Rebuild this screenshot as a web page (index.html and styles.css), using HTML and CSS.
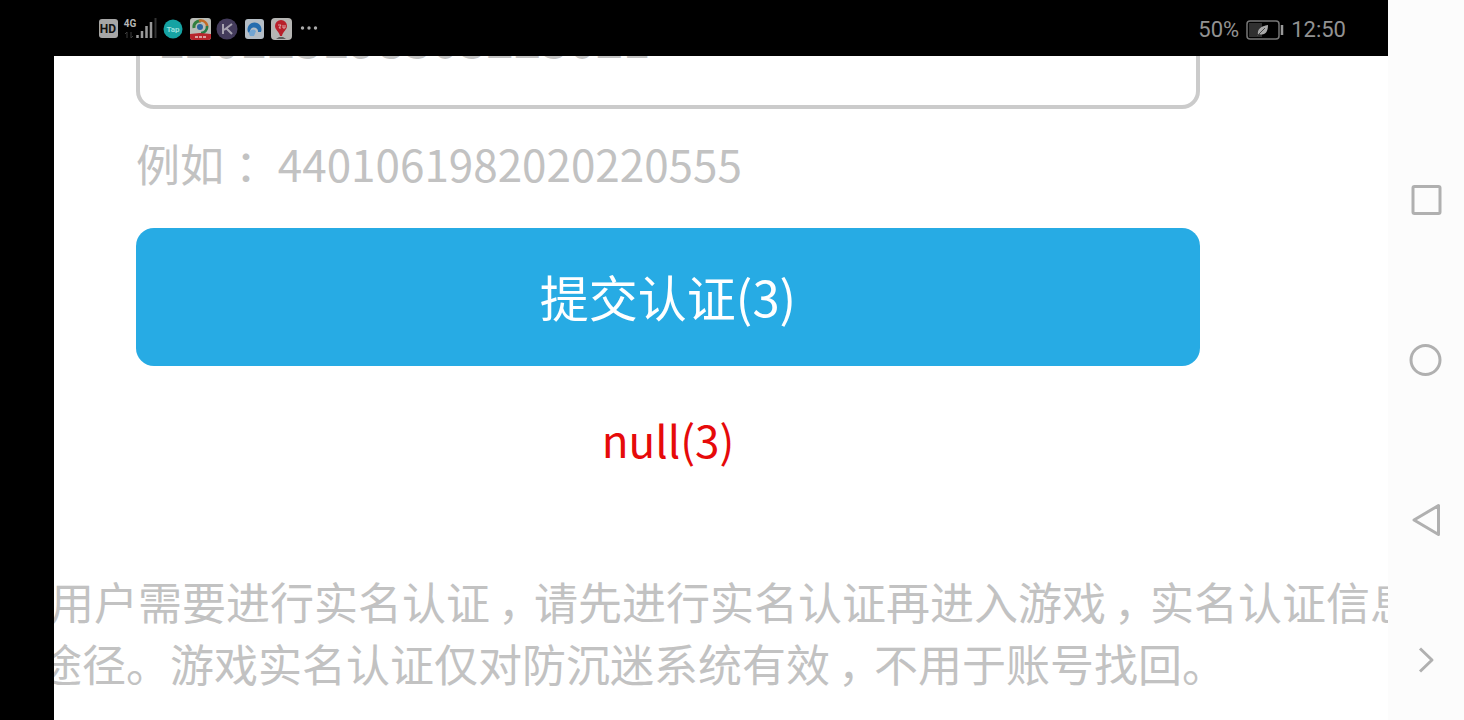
FILE: index.html
```html
<!DOCTYPE html>
<html lang="zh-CN">
<head>
    <meta charset="UTF-8">
    <meta name="viewport" content="width=device-width, initial-scale=1.0">
    <title>实名认证</title>
    <link rel="stylesheet" href="styles.css">
</head>
<body>
    <div class="screen">
        <header class="status-bar">
            <div class="status-icons">
                <svg width="232" height="44" viewBox="0 0 232 44">
                    <!-- HD -->
                    <rect x="9" y="11" width="19" height="19" rx="3" fill="#a6a6a6"/>
                    <text class="icon-hd" x="18" y="25" fill="#111">HD</text>
                    <!-- sinal 4G -->
                    <text class="icon-4g" x="40" y="19" fill="#b5b5b5">4G</text>
                    <path d="M37 24v6M35 26l2-2M41 24v6l2-2" fill="none" stroke="#3c3c3c" stroke-width="1"/>
                    <path d="M47.500 27v3M52 23v7M56.500 18v12M61 14v16" stroke="#9a9a9a" stroke-width="2.500"/>
                    <path d="M65.500 10v20" stroke="#333" stroke-width="2"/>
                    <!-- apps -->
                    <circle cx="83" cy="21" r="9.500" fill="#16a3a3"/>
                    <text class="icon-tap" x="83" y="24" fill="#9be0de">Tap</text>
                    <rect x="100" y="10" width="21" height="22" rx="3" fill="#b9bcb7"/>
                    <path d="M104 20a6 6 0 0 1 7-7" fill="none" stroke="#317e3d" stroke-width="3"/>
                    <path d="M109 13a6 6 0 0 1 8 7" fill="none" stroke="#c26b27" stroke-width="2.500"/>
                    <path d="M117 18a6 6 0 0 1-6 7" fill="none" stroke="#277c46" stroke-width="2.500"/>
                    <circle cx="110" cy="19" r="3" fill="#2b65a0"/>
                    <path d="M100 26l10-1 11 1v3q0 3-3 3h-15q-3 0-3-3z" fill="#b7252c"/>
                    <path d="M105 29h11" stroke="#d9a1a0" stroke-width="2" stroke-dasharray="3 1"/>
                    <circle cx="137" cy="21" r="10.500" fill="#433b5b"/>
                    <path d="M133 16v10M142 16l-8 6M136 20l6 6" fill="none" stroke="#a7a3b0" stroke-width="2"/>
                    <rect x="155" y="11" width="19" height="20" rx="3" fill="#b4bdc5"/>
                    <path d="M158 24a7 7 0 1 1 13 0h-3a4 4 0 1 0-7 2z" fill="#246cae"/>
                    <path d="M159 26a4 4 0 0 1 7-3l-2 5h-4z" fill="#72a5d2"/>
                    <rect x="181" y="10" width="21" height="22" rx="4" fill="#b6b5b3"/>
                    <path d="M191 12a6 6 0 0 1 6 6c0 4-4 5-5 10h-2c-1-5-5-6-5-10a6 6 0 0 1 6-6z" fill="#b81f2a"/>
                    <path d="M188 17h3l-2 3h2M193 17v3h2v-3" fill="none" stroke="#dba9a9" stroke-width="1"/>
                    <path d="M186 31l3-2h4l3 2z" fill="#5d5b5b"/>
                    <g fill="#aaa">
                        <circle cx="212.500" cy="20" r="1.700"/>
                        <circle cx="219" cy="20" r="1.700"/>
                        <circle cx="225.500" cy="20" r="1.700"/>
                    </g>
                </svg>
            </div>
            <div class="status-info">
                <span>50%</span>
                <svg width="38" height="20" viewBox="0 0 38 20">
                    <rect x="1" y="1" width="32" height="18" rx="3" fill="none" stroke="#777" stroke-width="1.500"/>
                    <path d="M3 3h13v14H3z" fill="#303030"/>
                    <path d="M12 15c-1-6 3-9 10-10 0 7-3 11-9 9z" fill="#a8a8a8"/>
                    <path d="M11 16l8-8" stroke="#444" stroke-width="1"/>
                    <path d="M36 5v10" stroke="#999" stroke-width="2.500"/>
                </svg>
                <time>12:50</time>
            </div>
        </header>

        <main class="content">
            <form class="auth-form">
                <input type="text" class="id-input" id="idNumber" value="120123198303223021" aria-describedby="idExample" aria-label="身份证号">
                <label class="example" id="idExample" for="idNumber">例如<span class="colon">：</span> 4401061982020220555</label>
                <button type="submit" class="submit-btn">提交认证(3)</button>
                <p class="error" role="alert">null(3)</p>
            </form>
            <p class="notice">用户需要进行实名认证<span class="comma">，</span>请先进行实名认证再进入游戏<span class="comma">，</span>实名认证信息<br>途径。游戏实名认证仅对防沉迷系统有效<span class="comma">，</span>不用于账号找回。</p>
        </main>
    </div>

    <nav class="nav-bar">
        <button type="button" aria-label="最近任务">
            <svg width="36" height="36" viewBox="0 0 36 36"><rect x="5" y="4.500" width="27" height="27" rx="1.500"/></svg>
        </button>
        <button type="button" aria-label="主页">
            <svg width="36" height="36" viewBox="0 0 36 36"><circle cx="17.500" cy="18" r="14.500"/></svg>
        </button>
        <button type="button" aria-label="返回">
            <svg width="36" height="36" viewBox="0 0 36 36"><path d="M30.500 3.500v29L6 18z"/></svg>
        </button>
        <button type="button" aria-label="展开">
            <svg width="36" height="36" viewBox="0 0 36 36"><path d="M12 6.500L24 18 12 29.500"/></svg>
        </button>
    </nav>
</body>
</html>
```
FILE: styles.css
```css
* {
    margin: 0;
    padding: 0;
    box-sizing: border-box;
}
body {
    font-family: "Noto Sans CJK SC", "Noto Sans", sans-serif;
    display: flex;
    height: 100vh;
    overflow: hidden;
    background-color: #000;
    color: #c2c2c2;
}
.screen {
    flex: 1;
    min-width: 0;
    display: flex;
    flex-direction: column;
}

/* Barra de status */
.status-bar {
    flex: none;
    height: 56px;
    display: flex;
    align-items: center;
    justify-content: space-between;
    padding: 3px 42px 0 90px;
    color: #929292;
    font-family: Roboto, sans-serif;
    font-size: 22px;
}
.status-bar svg {
    display: block;
}
.status-info {
    display: flex;
    align-items: center;
    gap: 7px;
}
.icon-hd, .icon-4g, .icon-tap {
    font-family: Roboto, sans-serif;
    font-weight: bold;
    text-anchor: middle;
}
.icon-hd {
    font-size: 12px;
}
.icon-4g {
    font-size: 10px;
}
.icon-tap {
    font-size: 8px;
}

/* Conteúdo rolado até o fim */
.content {
    flex: 1;
    min-height: 0;
    display: flex;
    flex-direction: column;
    justify-content: flex-end;
    margin-left: 54px;
    padding-bottom: 26px;
    overflow: hidden;
    background-color: #fff;
    font-size: 44px;
    line-height: 62px;
}
.auth-form {
    display: flex;
    flex-direction: column;
    padding: 0 188px 0 82px;
}
.id-input {
    width: 100%;
    height: 142px;
    padding: 0 18px 2px;
    border: 4px solid #cbcbcb;
    border-radius: 18px;
    background-color: #fff;
    color: #c2c2c2;
    font-family: inherit;
    font-size: 48px;
    font-weight: 500;
    outline: none;
}
.example {
    margin: 23px 0 34px;
}
.submit-btn {
    height: 138px;
    padding-bottom: 4px;
    border: none;
    border-radius: 18px;
    background-color: #27abe4;
    color: #fff;
    font-family: inherit;
    font-size: 49px;
    cursor: pointer;
}
.error {
    margin: 42px 0 100px;
    color: #e60a0a;
    text-align: center;
}
.notice {
    margin-left: -16px;
    text-indent: 12px;
    white-space: nowrap;
}
/* Pontuação centralizada na largura do caractere */
.colon, .comma {
    padding: 0 11px;
    font-feature-settings: "halt";
}
.comma {
    padding: 0 14px 0 8px;
}

/* Barra de navegação */
.nav-bar {
    flex: none;
    width: 76px;
    display: grid;
    grid-template-rows: 160fr 160fr 160fr 120fr;
    padding-top: 120px;
    background-color: #fcfcfc;
}
.nav-bar button {
    display: flex;
    align-items: center;
    justify-content: center;
    border: none;
    background: none;
    cursor: pointer;
}
.nav-bar svg {
    fill: none;
    stroke: #b0b0b0;
    stroke-width: 3;
    stroke-linejoin: round;
}
```
